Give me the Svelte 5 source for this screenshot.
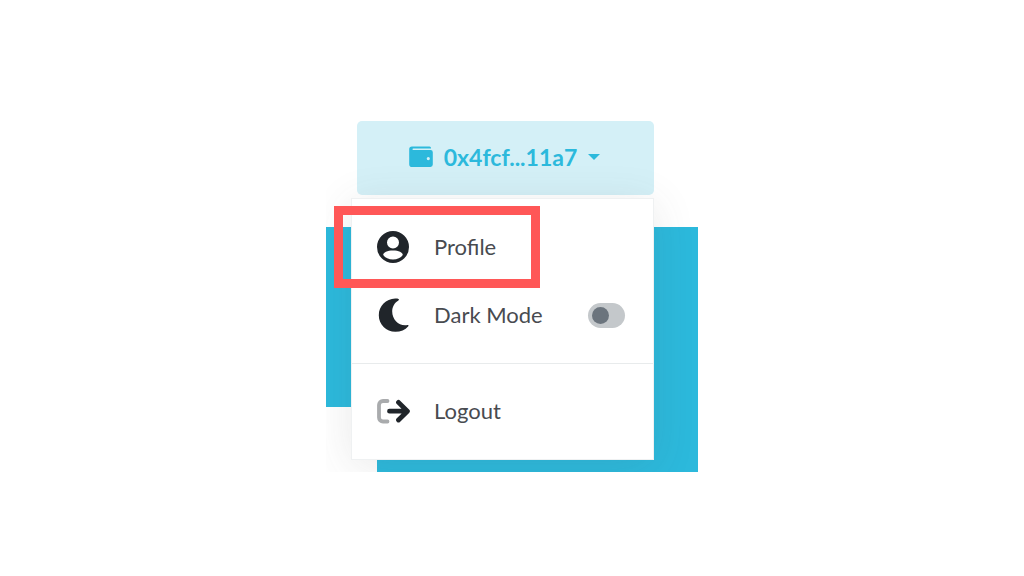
<script>
  let darkMode = $state(false);
  let open = $state(true);
</script>

<main>
  <section class="scene">
    <button class="wallet" type="button" aria-expanded={open} onclick={() => (open = !open)}>
      <svg class="wallet-icon" viewBox="0 0 24 22" aria-hidden="true">
        <path
          fill="currentColor"
          fill-rule="evenodd"
          d="M3 0.5H20.5A1.5 1.5 0 0 1 22 2V2.6H4.2A0.7 0.7 0 0 0 4.2 4.1H21.6A2.2 2.2 0 0 1 23.8 6.3V18.6A2.4 2.4 0 0 1 21.4 21H3A2.8 2.8 0 0 1 0.2 18.2V3.3A2.8 2.8 0 0 1 3 0.5ZM19.3 11A1.6 1.6 0 1 0 19.3 14.2A1.6 1.6 0 1 0 19.3 11Z"
        />
      </svg>
      <span>0x4fcf...11a7</span>
      <svg class="caret" viewBox="0 0 12 6" aria-hidden="true">
        <path fill="currentColor" d="M0 0H12L6 6Z" />
      </svg>
    </button>

    {#if open}
      <nav class="menu">
        <a class="item marked" href="#profile">
          <svg class="icon" viewBox="0 0 34 34" aria-hidden="true">
            <path
              fill="currentColor"
              fill-rule="evenodd"
              d="M17 1A16 16 0 1 1 17 33A16 16 0 1 1 17 1ZM17 6.4A6 6 0 1 0 17 18.4A6 6 0 1 0 17 6.4ZM17 20.6C11.3 20.6 7.2 22.6 7.2 25C9.2 27.8 12.8 29.6 17 29.6C21.2 29.6 24.8 27.8 26.8 25C26.8 22.6 22.7 20.6 17 20.6Z"
            />
          </svg>
          <span>Profile</span>
        </a>

        <label class="item">
          <svg class="icon" viewBox="0 0 34 34" aria-hidden="true">
            <path
              fill="currentColor"
              d="M19.2 0.6C20.4 0.5 21.6 0.7 22.5 1C23.2 1.3 23 2 22.4 2.4C18.4 4.8 16.2 8.8 16.2 13.6C16.2 22 23.3 28.6 31.4 27.1C32.3 26.9 32.8 27.6 32.3 28.2C29.2 31.9 24.6 33.8 19.4 33.8C10.2 33.8 2.8 26.5 2.8 17.2C2.8 8.1 10 0.8 19.2 0.6Z"
            />
          </svg>
          <span>Dark Mode</span>
          <input class="switch" type="checkbox" role="switch" bind:checked={darkMode} />
        </label>

        <hr />

        <button class="item" type="button">
          <svg class="icon" viewBox="0 0 34 34" fill="none" aria-hidden="true">
            <path
              stroke="#a9abad"
              stroke-width="3.8"
              stroke-linecap="round"
              d="M11.5 7H7A4 4 0 0 0 3 11V23.5A4 4 0 0 0 7 27.5H11.5"
            />
            <path
              stroke="currentColor"
              stroke-width="4.8"
              stroke-linecap="round"
              stroke-linejoin="round"
              d="M13.5 17.2H31M22.5 8.4L31.4 17.2L22.5 26"
            />
          </svg>
          <span>Logout</span>
        </button>
      </nav>
    {/if}
  </section>
</main>

<style>
  :global(body) {
    margin: 0;
    background: #fff;
  }

  main {
    display: grid;
    place-items: center;
    min-height: 100vh;
    font-family: Lato, "Open Sans", sans-serif;
  }

  .scene {
    box-sizing: border-box;
    display: flex;
    flex-direction: column;
    gap: 3px;
    width: min(372px, 100%);
    padding: 17px 44px 12px 25px;
    overflow: hidden;
    background:
      linear-gradient(#2cb9dc, #2cb9dc) 0 123px / 100% 180px no-repeat,
      linear-gradient(#2cb9dc, #2cb9dc) 51px 303px / 100% 100% no-repeat;
  }

  .wallet {
    display: flex;
    align-items: center;
    justify-content: center;
    gap: 11px;
    height: 74px;
    margin: 0 0 0 6px;
    padding: 0 2px 2px 0;
    border: 0;
    border-radius: 5px;
    background: #d4f0f7;
    color: #2cb9dc;
    font: 700 23px/32px Lato, "Open Sans", sans-serif;
    cursor: pointer;
  }

  .wallet-icon {
    width: 24px;
    height: 22px;
  }

  .caret {
    width: 12px;
    height: 6px;
  }

  .menu {
    position: relative;
    padding: 14px 0;
    border: 1px solid #eff1f2;
    background: #fff;
    box-shadow: 0 6px 40px rgba(70, 70, 70, 0.12);
  }

  .item {
    position: relative;
    box-sizing: border-box;
    display: flex;
    align-items: center;
    gap: 24px;
    width: 100%;
    height: 68px;
    padding: 0 28px 0 24px;
    border: 0;
    background: none;
    color: #484b50;
    font: 400 22px/32px Lato, "Open Sans", sans-serif;
    text-align: left;
    text-decoration: none;
    cursor: pointer;
  }

  .marked::after {
    content: "";
    position: absolute;
    inset: -7px 113px -7px -18px;
    border: 9px solid #ff5757;
    pointer-events: none;
  }

  .icon {
    flex: none;
    width: 34px;
    height: 34px;
    color: #20252a;
  }

  hr {
    height: 1px;
    margin: 14px 0 13px;
    border: 0;
    background: #e8ebec;
  }

  .switch {
    appearance: none;
    display: flex;
    align-items: center;
    box-sizing: border-box;
    width: 37px;
    height: 25px;
    margin: 0 0 0 auto;
    padding: 0 4px;
    border-radius: 13px;
    background: #c4c8cb;
    cursor: pointer;
  }

  .switch::before {
    content: "";
    width: 17px;
    height: 17px;
    border-radius: 50%;
    background: #6b747d;
  }

  .switch:checked {
    justify-content: flex-end;
    background: #2cb9dc;
  }
</style>
